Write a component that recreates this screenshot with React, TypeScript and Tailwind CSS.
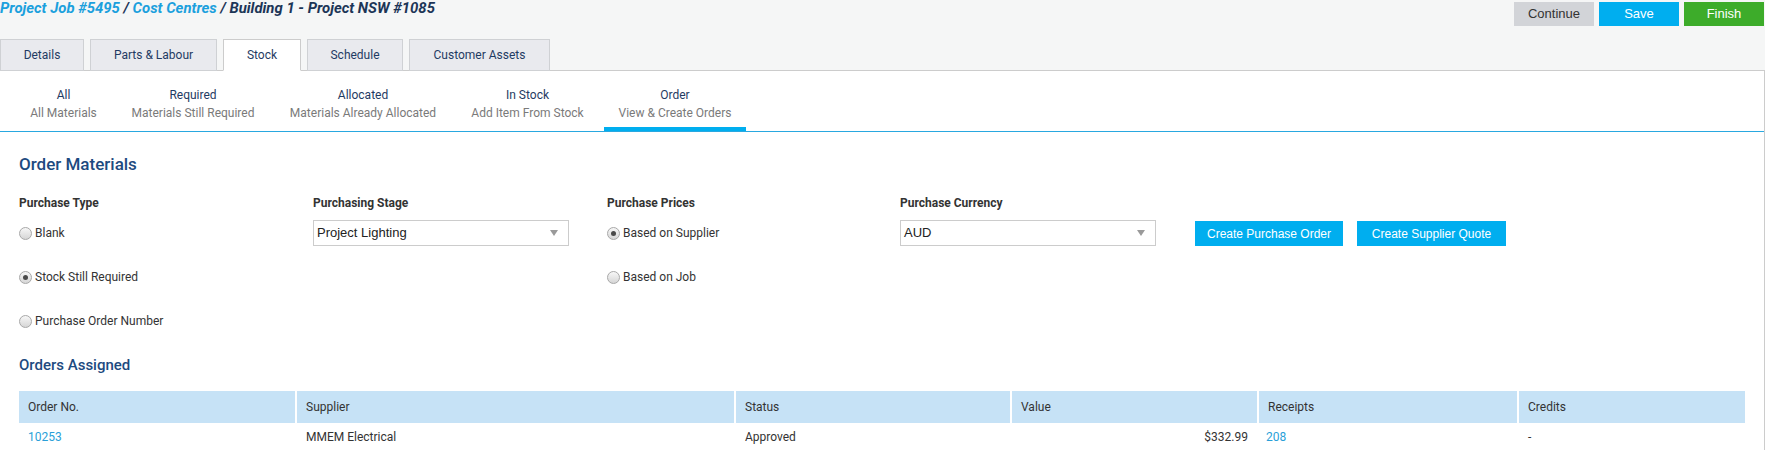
import React from "react";

function Radio({ checked, label }: { checked?: boolean; label: string }) {
  return (
    <div className="flex h-[26px] items-center gap-[3px]">
      <span className="flex h-[13px] w-[13px] items-center justify-center rounded-full border border-[#a8a8a8] bg-gradient-to-b from-[#f7f7f7] to-[#d6d6d6]">
        {checked && <span className="h-[5px] w-[5px] rounded-full bg-[#4a4a4a]" />}
      </span>
      <span className="text-[12px] leading-[16px] text-[#333]">{label}</span>
    </div>
  );
}

function Select({ value }: { value: string }) {
  return (
    <div className="flex h-[26px] w-[256px] items-center justify-between border border-[#cccccc] bg-white pl-[3px] pr-[10px]">
      <span className="text-[13px] text-[#222]" style={{ fontFamily: '"Liberation Sans", Arial, sans-serif' }}>
        {value}
      </span>
      <svg width="8" height="6" viewBox="0 0 8 6">
        <polygon points="0,0 8,0 4,6" fill="#9a9a9a" />
      </svg>
    </div>
  );
}

const tabs = ["Details", "Parts & Labour", "Stock", "Schedule", "Customer Assets"];
const tabWidths = ["w-[84px]", "w-[127px]", "w-[78px]", "w-[96px]", "w-[141px]"];

const subTabs = [
  { t: "All", s: "All Materials", w: "w-[95px]" },
  { t: "Required", s: "Materials Still Required", w: "w-[152px]" },
  { t: "Allocated", s: "Materials Already Allocated", w: "w-[176px]" },
  { t: "In Stock", s: "Add Item From Stock", w: "w-[141px]" },
  { t: "Order", s: "View & Create Orders", w: "w-[142px]", active: true },
];

export default function App() {
  return (
    <div
      className="h-[450px] w-[1765px] overflow-hidden bg-[#f5f6f6]"
      style={{ fontFamily: 'Roboto, "Noto Sans", sans-serif' }}
    >
      {/* Header */}
      <div className="flex h-[39px] items-start justify-between">
        <div className="text-[14.9px] font-bold italic leading-[17px]">
          <span className="text-[#1ba0dd]">Project Job #5495</span>
          <span className="text-[#1c3557]"> / </span>
          <span className="text-[#1ba0dd]">Cost Centres</span>
          <span className="text-[#1c3557]"> / Building 1 - Project NSW #1085</span>
        </div>
        <div
          className="flex gap-[5px] pr-[1px] pt-[2px] text-[13px]"
          style={{ fontFamily: '"Liberation Sans", Arial, sans-serif' }}
        >
          <button className="h-[24px] w-[80px] bg-[#d2d4d8] text-[#333]">Continue</button>
          <button className="h-[24px] w-[80px] bg-[#00aeef] text-white">Save</button>
          <button className="h-[24px] w-[80px] bg-[#3dac2a] text-white">Finish</button>
        </div>
      </div>

      {/* Tabs */}
      <div className="relative z-10 -mb-px flex h-[32px] gap-[6px]">
        {tabs.map((t, i) => (
          <div
            key={t}
            className={`${tabWidths[i]} flex items-center justify-center border text-[12px] ${
              t === "Stock"
                ? "border-[#cccccc] border-b-white bg-white text-[#1f3b63]"
                : "border-[#cfd1d4] bg-[#e9eaee] text-[#1f3b63]"
            }`}
          >
            {t}
          </div>
        ))}
      </div>

      {/* Panel */}
      <div className="h-[400px] border-r border-t border-[#cccccc] bg-white">
        {/* Sub tabs */}
        <div className="flex h-[61px] gap-[6px] border-b border-[#29a8e0] pl-[16px]">
          {subTabs.map((s) => (
            <div
              key={s.t}
              className={`${s.w} border-b-4 pt-[15px] text-center text-[12px] leading-[18px] ${
                s.active ? "border-[#00aeef]" : "border-transparent"
              }`}
            >
              <div className="text-[#1f3b63]">{s.t}</div>
              <div className="text-[#7a7a7a]">{s.s}</div>
            </div>
          ))}
        </div>

        <div className="px-[19px]">
          <div className="mt-[20px] text-[17px] font-medium leading-[24px] text-[#1d4a80]">Order Materials</div>

          <div className="mt-[19px] grid grid-cols-[294px_294px_293px_295px_auto]">
            <div className="flex flex-col">
              <div className="h-[16px] text-[12px] font-bold leading-[16px] text-[#333]">Purchase Type</div>
              <div className="mt-[9px] flex flex-col gap-[18px]">
                <Radio label="Blank" />
                <Radio label="Stock Still Required" checked />
                <Radio label="Purchase Order Number" />
              </div>
            </div>
            <div className="flex flex-col">
              <div className="h-[16px] text-[12px] font-bold leading-[16px] text-[#333]">Purchasing Stage</div>
              <div className="mt-[9px]">
                <Select value="Project Lighting" />
              </div>
            </div>
            <div className="flex flex-col">
              <div className="h-[16px] text-[12px] font-bold leading-[16px] text-[#333]">Purchase Prices</div>
              <div className="mt-[9px] flex flex-col gap-[18px]">
                <Radio label="Based on Supplier" checked />
                <Radio label="Based on Job" />
              </div>
            </div>
            <div className="flex flex-col">
              <div className="h-[16px] text-[12px] font-bold leading-[16px] text-[#333]">Purchase Currency</div>
              <div className="mt-[9px]">
                <Select value="AUD" />
              </div>
            </div>
            <div
              className="flex gap-[14px] pt-[26px] text-[12px]"
              style={{ fontFamily: '"Liberation Sans", Arial, sans-serif' }}
            >
              <button className="h-[25px] w-[148px] bg-[#00aeef] text-white">Create Purchase Order</button>
              <button className="h-[25px] w-[149px] bg-[#00aeef] text-white">Create Supplier Quote</button>
            </div>
          </div>

          <div className="mt-[21px] text-[15px] font-medium leading-[20px] text-[#1d4a80]">Orders Assigned</div>

          <div className="mt-[16px]">
            <div className="grid h-[32px] grid-cols-[276px_439px_276px_247px_260px_1fr] bg-[#c6e2f6] text-[12px] text-[#333]">
              <div className="flex items-center pl-[9px]">Order No.</div>
              <div className="flex items-center border-l-2 border-white pl-[9px]">Supplier</div>
              <div className="flex items-center border-l-2 border-white pl-[9px]">Status</div>
              <div className="flex items-center border-l-2 border-white pl-[9px]">Value</div>
              <div className="flex items-center border-l-2 border-white pl-[9px]">Receipts</div>
              <div className="flex items-center border-l-2 border-white pl-[9px]">Credits</div>
            </div>
            <div className="grid h-[28px] grid-cols-[276px_439px_276px_247px_260px_1fr] text-[12px] text-[#333]">
              <div className="flex items-center pl-[9px] text-[#2a9fd8]">10253</div>
              <div className="flex items-center pl-[11px]">MMEM Electrical</div>
              <div className="flex items-center pl-[11px]">Approved</div>
              <div className="flex items-center justify-end pr-[9px]">$332.99</div>
              <div className="flex items-center pl-[9px] text-[#2a9fd8]">208</div>
              <div className="flex items-center pl-[11px]">-</div>
            </div>
          </div>
        </div>
      </div>
    </div>
  );
}
